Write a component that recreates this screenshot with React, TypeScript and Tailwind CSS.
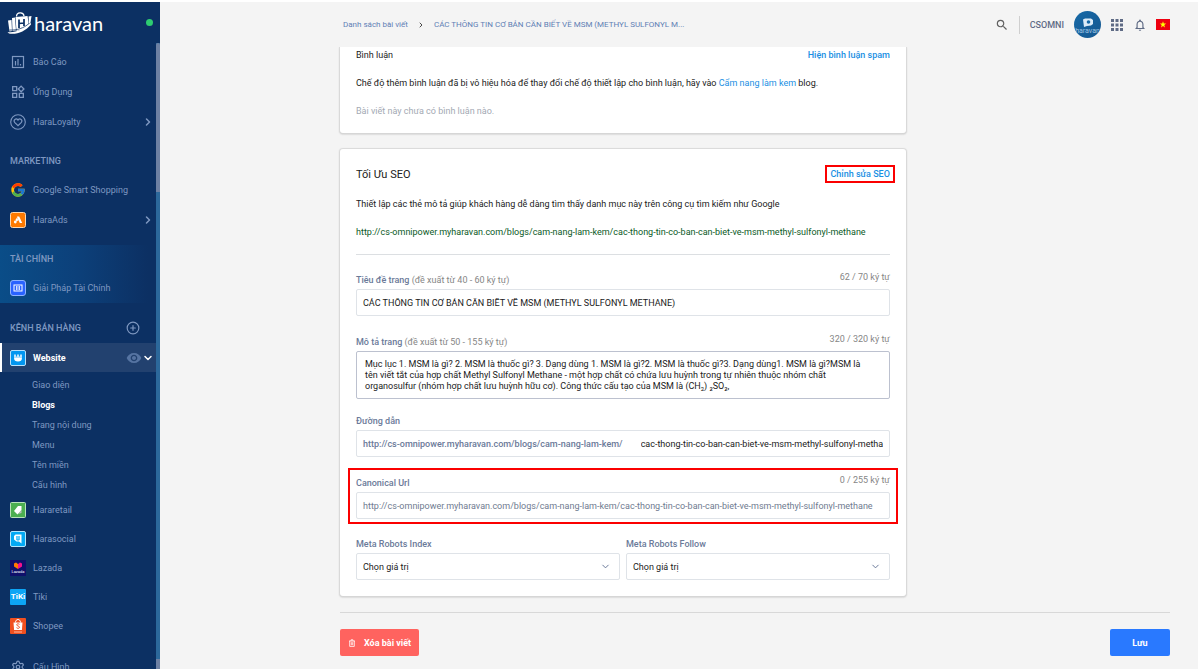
import React from 'react';
import { FcGoogle } from 'react-icons/fc';
import {
  MdApps,
  MdNotificationsNone,
  MdOutlineWidgets,
  MdSearch,
  MdVisibility,
} from 'react-icons/md';
import { ChevronDown, ChevronRight, CirclePlus, Settings } from 'lucide-react';

const BagLogo: React.FC = () => (
  <svg viewBox="0 0 50 46" className="h-[23px] w-[25px]" aria-hidden="true">
    <path d="M19 11c0-9 14-10 15-1" fill="none" stroke="#fff" strokeWidth="2.5" />
    <path d="M2 19l7-1 1 22-5 1zM10 14l6-1 2 26-7 1z" fill="#fff" />
    <path d="M17 12l24-2 3 19-14 9-11 2z" fill="#fff" />
    <path d="M24 17v17M34 16v14M24 25l10-1" stroke="#0c3063" strokeWidth="3.5" fill="none" />
    <path d="M1 42c14 2 33-4 46-19l1 4C37 41 18 48 4 45z" fill="#fff" />
    <path d="M5 38c15 1 29-4 39-13" stroke="#0c3063" strokeWidth="1.5" fill="none" />
    <path d="M43 11l6-1-2 13-3 2z" fill="#fff" />
  </svg>
);

const ReportIcon: React.FC = () => (
  <svg viewBox="0 0 16 16" className="size-4" fill="none" stroke="currentColor" aria-hidden="true">
    <rect x="2.5" y="2.5" width="11" height="11" strokeWidth="1.2" />
    <path d="M5.5 7v4.5M8 5v6.5M10.5 10v1.5" strokeWidth="1.2" />
  </svg>
);

const LoyaltyIcon: React.FC = () => (
  <svg viewBox="0 0 16 16" className="size-4" fill="none" stroke="currentColor" aria-hidden="true">
    <circle cx="8" cy="8" r="7.3" strokeWidth="1.1" />
    <path d="M8 11.7L4.6 8.3C2.8 6 6 3.600 8 6c2-2.400 5.200 0 3.400 2.300z" strokeWidth="1.2" />
  </svg>
);

const AdsIcon: React.FC = () => (
  <svg viewBox="0 0 16 16" className="size-4" aria-hidden="true">
    <rect x=".5" y=".5" width="15" height="15" rx="2" fill="#ff7a00" stroke="#ffd9b0" />
    <path d="M7 4.500h2.200l3 6.500h-2.400L7.300 6z" fill="#fff" />
    <circle cx="5.300" cy="10" r="1.400" fill="#fff" />
    <path d="M7 5.500l1.300 2.800-1.600 1.200-1.300-1.600z" fill="#fff" />
  </svg>
);

const FinanceIcon: React.FC = () => (
  <svg viewBox="0 0 16 16" className="size-4" aria-hidden="true">
    <rect x=".5" y=".5" width="15" height="15" rx="2.500" fill="#2962ff" stroke="#8fb3ff" />
    <rect x="4" y="5" width="8" height="6" fill="none" stroke="#fff" />
    <path d="M6.500 6v4M8 6v4M9.500 6v4" stroke="#fff" strokeWidth=".8" />
  </svg>
);

const WebsiteIcon: React.FC = () => (
  <svg viewBox="0 0 16 16" className="size-4" aria-hidden="true">
    <rect x=".5" y=".5" width="15" height="15" rx="1.500" fill="#0296f0" stroke="#b8e0fb" />
    <path d="M4 4.500h8v3H4z" fill="#bfe4fc" />
    <path d="M4 7.500h8c0 3-1.500 4-4 4s-4-1-4-4z" fill="#fff" />
    <path d="M6.500 4v2.500M9.500 4v2.500" stroke="#0296f0" />
  </svg>
);

const RetailIcon: React.FC = () => (
  <svg viewBox="0 0 16 16" className="size-4" aria-hidden="true">
    <rect x=".5" y=".5" width="15" height="15" rx="1" fill="#4caf50" stroke="#b9e2bb" />
    <path d="M4 9l4-5h3.500v4L7.500 12.500z" fill="#fff" />
    <path d="M8 12l3.500-4v3z" fill="#b9bfba" />
  </svg>
);

const SocialIcon: React.FC = () => (
  <svg viewBox="0 0 16 16" className="size-4" aria-hidden="true">
    <rect x=".5" y=".5" width="15" height="15" rx="1.500" fill="#03a9f4" stroke="#b3e5fc" />
    <path d="M4 5l1.500-1.500h6v9L9 10.500H6.500L4 8.500z" fill="#fff" />
    <path d="M6.800 5v4h2.400V5M8 5v4" fill="none" stroke="#03a9f4" strokeWidth=".9" />
  </svg>
);

const LazadaIcon: React.FC = () => (
  <div className="flex size-4 flex-col items-center justify-center bg-[#10106b]">
    <svg viewBox="0 0 10 7" className="h-[7px] w-[10px]" aria-hidden="true">
      <path d="M1 1.500L3 .5l2 1.500v5L1 4.500z" fill="#ff7a00" />
      <path d="M9 1.500L7 .5 5 2v5l4-2.500z" fill="#f5108c" />
    </svg>
    <span className="text-[4px] leading-[5px] text-white">Lazada</span>
  </div>
);

const TikiIcon: React.FC = () => (
  <div className="flex size-4 items-center justify-center rounded-[1px] bg-[#0da5f5] text-[8px] font-bold text-white">
    TiKi
  </div>
);

const ShopeeIcon: React.FC = () => (
  <div className="flex size-4 items-center justify-center rounded-[1px] bg-[#f0501f]">
    <svg viewBox="0 0 16 16" className="size-4" fill="none" aria-hidden="true">
      <path d="M5.500 4.500c0-4 5-4 5 0" stroke="#fff" />
      <path d="M3.500 4.500h9l-.6 7.500H4.100z" fill="#fff" />
      <path d="M9.500 6.300C8 5.300 6.500 6 6.700 7c.3 1.200 2.800.8 2.800 2.300 0 1.200-1.800 1.400-3 .4" stroke="#f0501f" />
      <path d="M4 14h8" stroke="#ffb8a0" />
    </svg>
  </div>
);

const TrashIcon: React.FC = () => (
  <svg viewBox="0 0 8 8" className="size-2" fill="none" stroke="#fff" strokeWidth=".8" aria-hidden="true">
    <path d="M1 2h6M3 2V.8h2V2M1.700 2v5.400h4.600V2M3.300 3.200v3M4.700 3.200v3" />
  </svg>
);

const Avatar: React.FC = () => (
  <div className="flex size-[27px] flex-col items-center justify-center overflow-hidden rounded-full bg-gradient-to-br from-[#176aa8] to-[#15578f]">
    <svg viewBox="0 0 12 9" className="mt-1 h-[9px] w-3" fill="none" aria-hidden="true">
      <path d="M1 1.500L3 .5h6l2 1.500v4L9 7.500 5 8 2 9z" fill="#dcebf7" />
      <circle cx="6.500" cy="4" r="1.800" fill="#176aa8" />
    </svg>
    <span className="text-[7px] leading-[8px] text-[#9fc3e0]">haravan</span>
  </div>
);

const Flag: React.FC = () => (
  <svg viewBox="0 0 14 11" className="h-[11px] w-[14px]" aria-label="Tiếng Việt">
    <path d="M0 0h14v11H0z" fill="#ee0010" />
    <path d="M7 2.300l.8 2.300h2.400L8.300 6l.7 2.400L7 7 5 8.400 5.700 6 3.800 4.600h2.400z" fill="#ff0" />
  </svg>
);

interface NavItemProps {
  icon: React.ReactNode;
  label: string;
  arrow?: boolean;
  compact?: boolean;
}

const NavItem: React.FC<NavItemProps> = ({ icon, label, arrow, compact }) => (
  <a
    href="#"
    className={`flex items-center gap-[7px] pr-[2px] pl-[10px] ${compact ? 'h-[29px]' : 'h-[30px]'}`}
  >
    <span className="flex size-4 shrink-0 items-center justify-center">{icon}</span>
    <span className="flex-1">{label}</span>
    {arrow && <ChevronRight className="size-3" strokeWidth={3} />}
  </a>
);

const subMenu = ['Giao diện', 'Blogs', 'Trang nội dung', 'Menu', 'Tên miền', 'Cấu hình'];

const Sidebar: React.FC = () => (
  <aside className="flex w-40 shrink-0 flex-col bg-[#0c3063] text-[#7f98c1]">
    <div className="flex h-[41px] shrink-0 items-center justify-between pr-[7px] pl-[7px]">
      <a href="#" className="flex items-center gap-[2px] text-white">
        <BagLogo />
        <span className="font-['Lato',sans-serif] text-[20px] leading-5">haravan</span>
      </a>
      <span className="size-[7px] rounded-full bg-[#2ecc71]" />
    </div>

    <div className="flex min-h-0 flex-1">
      <nav className="min-w-0 flex-1 overflow-hidden pt-1">
        <NavItem icon={<ReportIcon />} label="Báo Cáo" />
        <NavItem icon={<MdOutlineWidgets className="size-4" />} label="Ứng Dụng" />
        <NavItem icon={<LoyaltyIcon />} label="HaraLoyalty" arrow />

        <h2 className="mt-[10px] pl-[10px] text-[9px] leading-7 font-medium">MARKETING</h2>
        <NavItem icon={<FcGoogle className="size-4" />} label="Google Smart Shopping" />
        <NavItem icon={<AdsIcon />} label="HaraAds" arrow />

        <div className="mt-[10px] bg-gradient-to-r from-[#0a4d88] via-[#0c407a] to-[#0c3063] to-95%">
          <h2 className="pl-[10px] text-[9px] leading-7 font-medium">TÀI CHÍNH</h2>
          <NavItem icon={<FinanceIcon />} label="Giải Pháp Tài Chính" />
        </div>

        <div className="mt-[10px] flex h-[29px] items-center justify-between pr-4 pl-[10px]">
          <h2 className="text-[9px] font-medium">KÊNH BÁN HÀNG</h2>
          <button type="button" aria-label="Thêm kênh">
            <CirclePlus className="size-[14px]" strokeWidth={2} />
          </button>
        </div>

        <a
          href="#"
          className="mt-px flex h-[29px] items-center gap-[7px] border-l-2 border-white bg-[#22416f] pr-[2px] pl-2 font-bold text-white"
        >
          <WebsiteIcon />
          <span className="flex-1">Website</span>
          <span className="flex items-center">
            <MdVisibility className="size-4 text-[#5674a2]" />
            <ChevronDown className="size-3" strokeWidth={3} />
          </span>
        </a>
        <ul className="pt-[3px] pl-8">
          {subMenu.map((item) => (
            <li key={item} className="leading-5">
              <a href="#" className={item === 'Blogs' ? 'font-bold text-white' : ''}>
                {item}
              </a>
            </li>
          ))}
        </ul>

        <NavItem icon={<RetailIcon />} label="Hararetail" compact />
        <NavItem icon={<SocialIcon />} label="Harasocial" compact />
        <NavItem icon={<LazadaIcon />} label="Lazada" compact />
        <NavItem icon={<TikiIcon />} label="Tiki" compact />
        <NavItem icon={<ShopeeIcon />} label="Shopee" compact />

        <div className="mt-3">
          <NavItem icon={<Settings className="size-[14px]" />} label="Cấu Hình" />
        </div>
      </nav>

      {/* Scroll rail */}
      <div className="flex w-1 shrink-0 flex-col bg-[#2c689b]">
        <div className="h-[149px] rounded-t-full bg-[#6d80a3]" />
        <div className="flex-1" />
        <div className="h-[10px] bg-[#6d80a3]" />
      </div>
    </div>
  </aside>
);

const TopBar: React.FC = () => (
  <header className="flex h-[45px] shrink-0 items-center justify-between pr-7 pl-[183px]">
    <nav className="flex items-center gap-[9px] text-[8px] text-[#5f80b5]">
      <a href="#">Danh sách bài viết</a>
      <ChevronRight className="size-2 text-[#4a4a4a]" strokeWidth={3} />
      <span>CÁC THÔNG TIN CƠ BẢN CẦN BIẾT VỀ MSM (METHYL SULFONYL M...</span>
    </nav>
    <div className="flex items-center gap-[10px] text-[#5f6b85]">
      <button type="button" aria-label="Tìm kiếm">
        <MdSearch className="size-[14px] text-[#606060]" />
      </button>
      <span className="h-[18px] w-px bg-[#cfcfcf]" />
      <span className="text-[9px] font-medium">CSOMNI</span>
      <div className="flex items-center gap-[7px]">
        <Avatar />
        <button type="button" aria-label="Ứng dụng">
          <MdApps className="size-[18px]" />
        </button>
        <button type="button" aria-label="Thông báo">
          <MdNotificationsNone className="size-[14px]" />
        </button>
        <a href="#" className="pl-[2px]">
          <Flag />
        </a>
      </div>
    </div>
  </header>
);

const boxClass = 'h-[27px] w-full rounded-[2px] border border-[#dfe3e8] bg-white px-[6px]';

interface FieldProps {
  id: string;
  label: string;
  hint?: string;
  count?: string;
  children: React.ReactNode;
}

const Field: React.FC<FieldProps> = ({ id, label, hint, count, children }) => (
  <div>
    <div className="mb-[2px] flex h-[17px] justify-between text-[#868686]">
      <label htmlFor={id} className="self-end">
        <span className="font-medium text-[#6b7a99]">{label}</span> {hint}
      </label>
      {count && <span>{count}</span>}
    </div>
    {children}
  </div>
);

const RobotsSelect: React.FC<{ id: string; label: string }> = ({ id, label }) => (
  <Field id={id} label={label}>
    <div className="relative">
      <select id={id} className={`${boxClass} appearance-none`}>
        <option>Chọn giá trị</option>
      </select>
      <ChevronDown className="pointer-events-none absolute top-2 right-[9px] size-[11px] text-[#5f6f92]" />
    </div>
  </Field>
);

const CommentCard: React.FC = () => (
  <section className="flex flex-col gap-[14px] rounded-b-[3px] bg-white px-4 pt-px pb-[15px] shadow-[0_0_1px_1px_#d9d9d9,0_1px_2px_#a8a8a8]">
    <div className="flex justify-between">
      <h2>Bình luận</h2>
      <a href="#" className="font-medium text-[#1a8fe3]">
        Hiện bình luận spam
      </a>
    </div>
    <p>
      Chế độ thêm bình luận đã bị vô hiệu hóa để thay đổi chế độ thiết lập cho bình luận, hãy vào{' '}
      <a href="#" className="text-[#1a8fe3]">
        Cẩm nang làm kem
      </a>{' '}
      blog.
    </p>
    <p className="text-[#a3a9b3]">Bài viết này chưa có bình luận nào.</p>
  </section>
);

const SeoCard: React.FC = () => (
  <section className="mt-4 rounded-[3px] bg-white px-4 pt-[18px] pb-4 shadow-[0_0_1px_1px_#d9d9d9,0_1px_2px_#a8a8a8]">
    <div className="flex justify-between">
      <h2 className="text-[11px] leading-4">Tối Ưu SEO</h2>
      <div className="relative h-[14px]">
        <a href="#" className="font-medium text-[#1a8fe3]">
          Chỉnh sửa SEO
        </a>
        <span className="pointer-events-none absolute -inset-x-[5px] -inset-y-[2px] border-2 border-[#fb0000]" />
      </div>
    </div>
    <p className="mt-[14px]">
      Thiết lập các thẻ mô tả giúp khách hàng dễ dàng tìm thấy danh mục này trên công cụ tìm kiếm như Google
    </p>
    <p className="mt-[14px] text-[#0b5a26]">
      http://cs-omnipower.myharavan.com/blogs/cam-nang-lam-kem/cac-thong-tin-co-ban-can-biet-ve-msm-methyl-sulfonyl-methane
    </p>
    <hr className="mt-[15px] mb-[15px] border-[#dcdfe2]" />

    <Field id="seo-title" label="Tiêu đề trang" hint="(đề xuất từ 40 - 60 ký tự)" count="62 / 70 ký tự">
      <input
        id="seo-title"
        className={boxClass}
        defaultValue="CÁC THÔNG TIN CƠ BẢN CẦN BIẾT VỀ MSM (METHYL SULFONYL METHANE)"
      />
    </Field>

    <div className="mt-4">
      <Field id="seo-desc" label="Mô tả trang" hint="(đề xuất từ 50 - 155 ký tự)" count="320 / 320 ký tự">
        <textarea
          id="seo-desc"
          className="block h-12 w-full resize-none overflow-hidden rounded-[2px] border border-[#bcc1cf] py-[7px] pr-5 pl-2 leading-[11px]"
          defaultValue="Mục lục 1. MSM là gì? 2. MSM là thuốc gì? 3. Dạng dùng 1. MSM là gì?2. MSM là thuốc gì?3. Dạng dùng1. MSM là gì?MSM là tên viết tắt của hợp chất Methyl Sulfonyl Methane - một hợp chất có chứa lưu huỳnh trong tự nhiên thuộc nhóm chất organosulfur (nhóm hợp chất lưu huỳnh hữu cơ). Công thức cấu tạo của MSM là (CH₃) ₂SO₂,"
        />
      </Field>
    </div>

    <div className="mt-3">
      <Field id="seo-path" label="Đường dẫn">
        <div className={`${boxClass} flex items-center gap-[18px]`}>
          <span className="font-medium text-[#6b7a99]">
            http://cs-omnipower.myharavan.com/blogs/cam-nang-lam-kem/
          </span>
          <input
            id="seo-path"
            className="min-w-0 flex-1"
            defaultValue="cac-thong-tin-co-ban-can-biet-ve-msm-methyl-sulfonyl-methane"
          />
        </div>
      </Field>
    </div>

    <div className="relative mt-4">
      <Field id="seo-canonical" label="Canonical Url" count="0 / 255 ký tự">
        <input
          id="seo-canonical"
          className={`${boxClass} placeholder:text-[#6f7b90]`}
          placeholder="http://cs-omnipower.myharavan.com/blogs/cam-nang-lam-kem/cac-thong-tin-co-ban-can-biet-ve-msm-methyl-sulfonyl-methane"
        />
      </Field>
      <span className="pointer-events-none absolute -inset-x-2 -inset-y-[5px] border-2 border-[#fb0000]" />
    </div>

    <div className="mt-[15px] grid grid-cols-2 gap-[6px]">
      <RobotsSelect id="robots-index" label="Meta Robots Index" />
      <RobotsSelect id="robots-follow" label="Meta Robots Follow" />
    </div>
  </section>
);

const App: React.FC = () => {
  return (
    <div className="flex h-screen overflow-hidden border-t-2 border-white bg-[#f4f4f4] font-['Roboto',sans-serif] text-[9px] leading-[14px] text-[#212121]">
      <Sidebar />
      <div className="flex min-w-0 flex-1 flex-col">
        <TopBar />
        <main className="min-h-0 flex-1 overflow-hidden pr-7 pl-[180px]">
          <div className="grid grid-cols-[15fr_7fr]">
            <div className="min-w-0">
              <CommentCard />
              <SeoCard />
            </div>
          </div>

          <div className="mt-4 flex justify-between border-t border-[#d8d8d8] pt-4 font-bold text-white">
            <button type="button" className="flex h-[27px] items-center gap-2 rounded-[2px] bg-[#ff635f] px-2">
              <TrashIcon />
              Xóa bài viết
            </button>
            <button type="button" className="h-[27px] w-[60px] rounded-[2px] bg-[#2979ff]">
              Lưu
            </button>
          </div>
        </main>
      </div>
    </div>
  );
};

export default App;
